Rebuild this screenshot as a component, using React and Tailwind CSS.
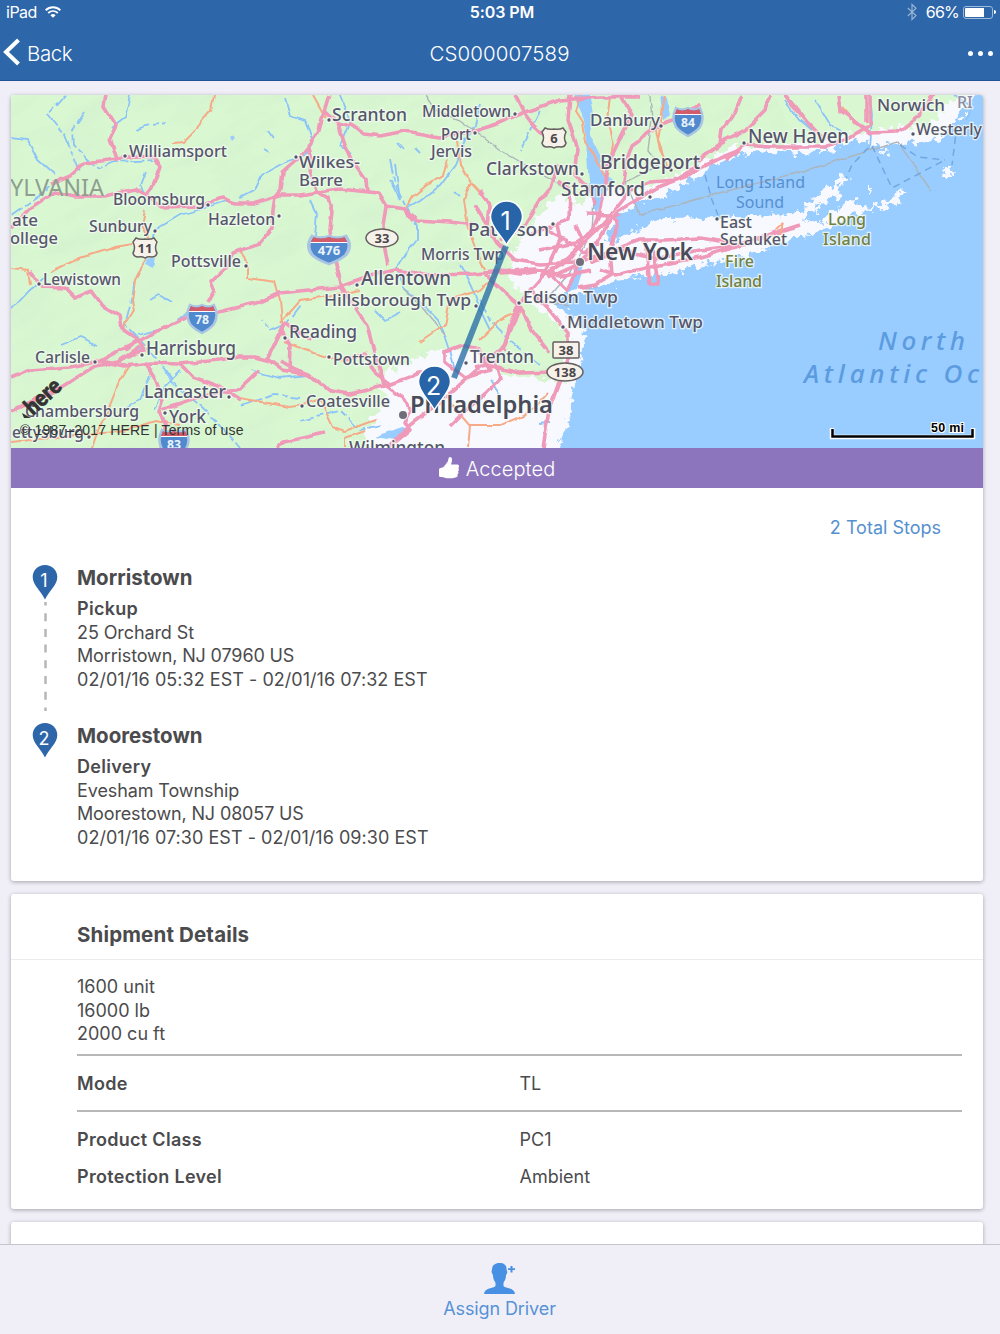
const stops = [
  {
    number: 1,
    city: "Morristown",
    type: "Pickup",
    address: "25 Orchard St",
    cityLine: "Morristown, NJ 07960 US",
    window: "02/01/16 05:32 EST - 02/01/16 07:32 EST",
  },
  {
    number: 2,
    city: "Moorestown",
    type: "Delivery",
    address: "Evesham Township",
    cityLine: "Moorestown, NJ 08057 US",
    window: "02/01/16 07:30 EST - 02/01/16 09:30 EST",
  },
];

const highways = [
  "M106 95L104 107L116 126L110 138L117 159",
  "M11 228L30 208L55 192L75 196L105 196L135 189L147 195L160 207L200 206L222 198L235 203L253 203L280 195L300 195L318 192L340 189L378 193L386 206L405 209L413 220",
  "M52 184L70 176L85 163L117 159L135 156L155 157L160 166L152 188L147 195",
  "M329 95L325 108L318 133L300 157L283 172L281 190L275 197L273 210L272 228L258 245L240 250L232 253L225 268L210 282L214 292L208 303",
  "M325 112L338 124L345 145L352 160L366 180L367 191",
  "M338 125L350 123L365 134L380 136L405 131L440 137L475 131L500 123L525 112L560 100L600 97L640 97",
  "M308 148L311 160L310 175L318 192L328 198L332 212L330 230L335 260L342 287",
  "M386 207L383 225L385 250L388 265",
  "M406 209L417 220L450 222L475 225",
  "M11 378L30 370L70 367L100 361L120 350L137 342L150 335L165 327L187 317L215 313L260 302L280 293L340 287L370 276L395 270L430 275L475 274L510 270",
  "M100 361L125 366L150 363L180 364L220 360L240 357L255 357L270 361L282 370L310 375L330 391L350 394L375 388L385 386L420 373L440 372",
  "M30 272L42 287L65 288L75 298L92 291L103 306L120 316L122 329L137 339L145 350",
  "M11 411L55 391L95 366L118 362L140 347",
  "M145 362L155 378L163 400L160 412L165 425L160 448",
  "M163 410L195 398L240 389L260 370",
  "M180 364L193 377L220 387L240 400",
  "M390 384L375 373L365 354L345 360",
  "M340 287L357 310L367 325L374 352L385 385L403 397L410 410L404 423L410 430L388 448",
  "M276 448L284 442L325 433",
  "M515 95L524 113L534 126L548 139",
  "M570 95L568 120L575 140L578 150L575 175L590 190L595 205",
  "M620 95L632 115L622 135L608 165L605 190L600 212L590 236",
  "M700 105L682 118L660 125L632 145L625 165L622 190",
  "M742 95L735 112L722 130L720 145L695 162",
  "M770 95L765 110L745 130L725 140L700 160",
  "M785 95L808 123L825 140",
  "M838 95L840 110L856 122L870 133L898 132L920 115L933 95",
  "M866 95L866 122",
  "M725 160L745 145L770 147L825 147L850 137L870 125L870 95",
  "M740 150L720 158L700 168L690 175L660 186L640 198L618 211L605 228L592 250L575 266L548 278",
  "M700 165L675 180L650 182L630 190L610 215L595 232L565 260L540 280L522 300L505 345L440 402L410 425L388 448",
  "M480 190L489 206L487 225L498 243L515 260L540 264L575 262",
  "M500 240L525 225L540 200L550 188L557 165",
  "M530 235L557 224L569 220L570 190L558 180",
  "M500 270L520 273L540 270L555 278L567 290L580 263L607 252L640 240L665 240L700 238L740 244L800 225",
  "M590 263L620 250L655 259L700 250L750 244",
  "M600 270L615 275L650 267L700 257L735 247L775 231",
  "M645 240L650 284L658 284L653 250",
  "M610 250L612 275L595 285L578 288",
  "M485 274L505 293L520 306L530 328L549 352",
  "M530 290L550 310L568 333L568 360L558 385L549 410L543 448",
  "M490 366L520 373L553 372",
  "M475 367L495 362L500 378L486 393L465 410L450 425",
  "M445 352L460 346L480 350L490 370L465 378L445 362L445 350",
  "M280 361L290 367L310 375",
  "M267 360L285 322L310 340",
  "M289 373L290 345L280 330L284 322",
  "M520 302L510 325L503 350",
  "M475 206L487 225",
];

const interchanges = [
  "M545 230L565 240L585 252L600 243",
  "M540 250L575 243L595 230L620 214",
  "M557 224L560 240L548 265L538 283",
  "M575 225L582 240L570 260L550 270",
  "M500 272L535 269L565 276L590 270",
  "M587 214L610 215L618 222L612 245",
  "M120 362L135 353L145 351L138 340L125 350",
];

const minorRoads = [
  "M214 95L211 110L201 121L195 132L184 143L172 144",
  "M50 272L80 258L115 247L145 242L147 258L135 280L132 300L134 310L122 330",
  "M145 210L142 225L150 240",
  "M238 250L247 260L247 278L275 282L280 300L282 322",
  "M313 95L326 118",
  "M457 140L460 165L471 183L463 200L467 225L476 250L485 270",
  "M448 160L443 175L427 185L412 197L406 208",
  "M471 183L485 198L491 212",
  "M580 95L575 112L582 123L585 142L595 155L605 178",
  "M610 97L607 120L613 145L608 175",
  "M655 125L660 150L672 172",
  "M665 95L658 140L665 160",
  "M130 365L118 385L108 410L98 430L92 448",
  "M11 268L28 270L30 285",
  "M240 398L290 407L303 405L320 399L333 427L345 431L375 420",
  "M11 442L50 438L85 434L120 432L155 421L180 425",
  "M284 342L328 358L350 360",
  "M420 342L445 325L450 300L480 290L500 270",
  "M440 390L470 425L500 425L530 412L548 392",
  "M470 425L468 448",
  "M480 340L500 320L520 311",
  "M365 431L345 438L345 448",
  "M842 108L856 124",
  "M280 322L300 300L322 297L360 290",
];

const rivers = [
  "M65 95L48 115L65 135L73 155L80 172",
  "M130 95L125 118L112 128",
  "M11 138L28 140L38 160L55 175",
  "M84 112L72 130L73 145L90 162L100 168L115 162L155 160",
  "M285 98L290 115L305 120L312 140L305 155L290 160L262 175L255 190L240 198",
  "M147 196L140 185L145 172",
  "M11 215L40 195L55 182",
  "M155 230L180 215L205 208L230 200",
  "M480 105L475 125L465 140L455 165L440 185L420 200L408 207L417 225L417 240L405 255L397 268L405 290L420 302L438 320L445 335L450 350L455 370",
  "M155 233L150 255L140 270L133 285L130 305L125 325L140 340L165 368L180 390L200 405L225 430L240 448",
  "M11 310L30 290L45 278",
  "M138 335L165 328L195 308",
  "M300 305L287 322L270 330L262 320",
  "M310 200L317 215L315 235L320 255",
  "M395 165L400 200L390 180",
  "M390 160L395 185L405 205",
  "M340 95L350 120L340 145L352 155",
  "M250 370L280 378L308 375",
  "M240 405L258 400L275 395L300 398",
  "M60 345L80 337L98 345M150 300L160 295L172 302",
  "M375 310L385 320L400 312",
  "M480 300L490 320L510 340L540 365",
  "M490 380L500 395M538 424L550 423",
  "M460 265L468 280L475 295L480 310L490 330",
  "M540 110L530 130L520 150M630 120L615 150",
  "M785 100L800 120L812 130M815 100L830 125L845 133",
  "M180 370L165 385L155 410M150 375L140 400L120 412",
  "M300 420L340 410L360 430L380 425",
  "M268 130L274 138M265 150L270 153M398 143L404 150M415 147L420 152M455 192L460 196",
  "M870 95L872 115L870 150M955 95L972 108L966 120",
  "M136 130L145 126L165 123",
];

const lakes = [
  "M573 95L589 95L594 118L590 135L600 155L602 170L612 180L603 200L596 215L590 195L588 170L586 140L582 115Z",
  "M660 95L667 98L670 115L663 120Z",
  "M148 260L155 258L153 268L146 265Z",
  "M137 346L143 348L141 354Z",
  "M375 437L402 427L412 430L396 440Z",
  "M575 265L584 265L577 290L568 292Z",
  "M230 137L233 135L235 138L232 141Z",
  "M162 365L170 375L176 388L170 382Z",
];

// [text, x, baseline, width, size]
const cityLabels = [
  ["Scranton", 332, 121, 75, 18],
  ["Middletown", 422, 117, 89, 17],
  ["Port", 441, 140, 30, 16],
  ["Jervis", 431, 157, 41, 16],
  ["Williamsport", 129, 157, 98, 17],
  ["Wilkes-", 299, 168, 61, 17],
  ["Barre", 299, 186, 44, 17],
  ["Clarkstown", 486, 175, 93, 18],
  ["Danbury", 590, 126, 70, 17],
  ["Bridgeport", 600, 169, 100, 19],
  ["Stamford", 561, 196, 84, 19],
  ["New Haven", 748, 143, 101, 19],
  ["Norwich", 877, 111, 68, 17],
  ["Westerly", 916, 135, 66, 17],
  ["Bloomsburg", 113, 205, 92, 17],
  ["Sunbury", 89, 232, 63, 17],
  ["Hazleton", 208, 225, 67, 17],
  ["ate", 12, 226, 26, 17],
  ["ollege", 10, 244, 48, 17],
  ["Pottsville", 171, 267, 70, 17],
  ["Lewistown", 43, 285, 78, 17],
  ["Paterson", 468, 236, 81, 18],
  ["Morris Twp", 421, 260, 83, 17],
  ["Allentown", 361, 285, 90, 19],
  ["Hillsborough Twp", 324, 306, 147, 17],
  ["Edison Twp", 523, 303, 95, 17],
  ["Middletown Twp", 567, 328, 136, 17],
  ["Harrisburg", 146, 355, 90, 19],
  ["Carlisle", 35, 363, 55, 17],
  ["Reading", 289, 338, 68, 18],
  ["Pottstown", 333, 365, 77, 17],
  ["Trenton", 470, 363, 64, 18],
  ["Coatesville", 306, 407, 84, 17],
  ["Lancaster", 144, 398, 82, 18],
  ["Chambersburg", 25, 417, 114, 17],
  ["York", 169, 423, 37, 18],
  ["ettysburg", 12, 438, 72, 17],
  ["East", 720, 228, 32, 16],
  ["Setauket", 720, 245, 67, 16],
  ["Wilmington", 349, 454, 96, 18],
];

const dots = [
  [329, 120], [515, 114], [475, 133], [125, 156], [296, 157], [582, 174], [661, 126],
  [671, 170], [650, 197], [744, 143], [913, 134], [208, 205], [155, 231], [279, 216],
  [246, 266], [39, 284], [553, 224], [357, 285], [476, 306], [519, 303], [563, 327],
  [142, 355], [95, 362], [285, 338], [329, 357], [466, 363], [302, 406], [229, 397],
  [165, 413], [89, 437], [717, 219],
];

function MapPin({ x, y, number }) {
  return (
    <g transform={`translate(${x} ${y})`}>
      <path
        d="M0 0C-5 -10 -16 -18 -16 -28C-16 -37 -9 -44 0 -44C9 -44 16 -37 16 -28C16 -18 5 -10 0 0Z"
        fill="#2865a8"
        stroke="#fff"
        strokeWidth="1.5"
      />
      <text y="-15" x="-1" textAnchor="middle" className="fill-white font-['Inter'] text-[25px]">
        {number}
      </text>
    </g>
  );
}

function InterstateShield({ x, y, label, wide }) {
  return (
    <g transform={`translate(${x} ${y}) scale(${wide ? 1.4 : 1} 1)`}>
      <path
        d="M-12 -13Q-6 -10 0 -13Q6 -10 12 -13Q17 -3 12 6Q8 11 0 15Q-8 11 -12 6Q-17 -3 -12 -13Z"
        fill="#5089cd"
        stroke="#a9c5e2"
        strokeWidth="2.5"
      />
      <path d="M-11 -12Q-6 -9 0 -12Q6 -9 11 -12L13 -7H-13Z" fill="#d45b6a" />
      <path d="M-13 -6.5H13" stroke="#fff" strokeWidth="1" />
      <text
        y="6"
        textAnchor="middle"
        textLength={wide ? 16 : 14}
        lengthAdjust="spacingAndGlyphs"
        className="fill-[#e9f3fc] font-['Noto_Sans'] text-[13px] font-bold"
      >
        {label}
      </text>
    </g>
  );
}

function RouteBadge({ x, y, width, label, shape }) {
  return (
    <g transform={`translate(${x} ${y})`} fill="#f6f2ea" stroke="#665f60" strokeWidth="1.5">
      {shape === "oval" && <ellipse rx={width / 2} ry="9" />}
      {shape === "rect" && <rect x={-width / 2} y="-8" width={width} height="16" rx="1" />}
      {shape === "us" && (
        <path d="M-9 -10Q-5 -8 0 -9Q5 -8 9 -10L12 -6Q9 0 12 5Q11 9 7 9Q3 8 0 10Q-3 8 -7 9Q-11 9 -12 5Q-9 0 -12 -6Z" />
      )}
      <text
        y="5"
        textAnchor="middle"
        stroke="none"
        className="fill-[#4c474c] font-['Noto_Sans'] text-[13px] font-bold"
      >
        {label}
      </text>
    </g>
  );
}

function RouteMap() {
  return (
    <svg viewBox="11 95 972 353" className="block h-[353px] w-full overflow-hidden">
      <defs>
        <filter id="coast" x="-5%" y="-5%" width="110%" height="110%">
          <feTurbulence type="fractalNoise" baseFrequency="0.14" numOctaves="3" seed="4" result="noise" />
          <feDisplacementMap
            in="SourceGraphic"
            in2="noise"
            scale="17"
            xChannelSelector="R"
            yChannelSelector="G"
            result="moved"
          />
          <feGaussianBlur in="moved" stdDeviation="0.4" />
        </filter>
        <filter id="wiggle" x="-5%" y="-5%" width="110%" height="110%">
          <feTurbulence type="fractalNoise" baseFrequency="0.07" numOctaves="2" seed="9" result="noise" />
          <feDisplacementMap
            in="SourceGraphic"
            in2="noise"
            scale="5"
            xChannelSelector="R"
            yChannelSelector="G"
            result="moved"
          />
          <feGaussianBlur in="moved" stdDeviation="0.6" />
        </filter>
        <filter id="relief" x="0" y="0" width="100%" height="100%">
          <feTurbulence type="fractalNoise" baseFrequency="0.015 0.045" numOctaves="4" seed="3" />
          <feColorMatrix values="0 0 0 0 0.5  0 0 0 0 0.68  0 0 0 0 0.5  0 1.8 0 0 -0.75" />
        </filter>
      </defs>

      <rect x="11" y="95" width="972" height="353" fill="#d9f8d2" />
      <g transform="rotate(-28 300 270)" opacity="0.2">
        <rect x="-100" y="-50" width="900" height="640" filter="url(#relief)" />
      </g>

      {/* Metro areas and coastline */}
      <g filter="url(#coast)">
        <path
          d="M545 205L562 195L580 205L600 185L640 190L700 165L735 145L770 146L830 140L870 130L930 125L950 100L1010 80V300L600 330L590 480H370L366 430L385 400L380 375L425 355L445 348L480 352L500 372L565 382L560 350L570 335L540 310L515 292L505 270L525 235Z"
          fill="#f7f9ff"
        />
        <path d="M440 268L503 273L530 303L553 332L556 362L535 371L505 362L470 347L440 346Z" fill="#d9f8d2" />
        <path
          d="M605 240L618 215L640 202L665 196L690 180L715 165L735 156L760 151L800 154L835 149L855 138L870 145L905 144L935 140L955 121L970 105L985 85H1020V480H556L560 445L570 415L575 385L582 350L586 330L578 320L555 305L545 302L565 295L588 292L610 283L640 274L690 262L740 252L780 243L812 229L830 226L790 215L720 217L665 218L635 232L615 245Z"
          fill="#99ccff"
        />
        <path
          d="M606 245L630 233L660 219L700 226L730 216L780 217L803 210L822 191L844 176L848 179L832 195L812 212L795 222L815 226L830 215L845 204L856 198L868 210L880 203L900 192L908 193L890 207L860 213L820 232L790 240L760 252L720 262L680 270L640 277L600 286L590 278Z"
          fill="#f7f9ff"
        />
        <path
          d="M943 170L952 168L953 176L945 176ZM866 188L874 188L870 193ZM880 151L890 149L885 154ZM832 188L842 194L836 199Z"
          fill="#f7f9ff"
        />
      </g>

      <g filter="url(#wiggle)">
        {lakes.map((d) => (
          <path key={d} d={d} fill="#99ccff" />
        ))}
        <g fill="none" stroke="#8cc3f8" strokeWidth="1.8">
          {rivers.map((d, i) => (
            <path key={d} d={d} strokeDasharray={i % 3 === 0 ? "14 3 6 3" : undefined} />
          ))}
        </g>
        <g fill="none" stroke="#abb5bb" strokeWidth="1.4">
          <path d="M425 95L435 110L460 120L500 150L545 176L570 190" />
          <path d="M650 95L652 120L648 150L660 165L625 182L640 215L720 193L800 172L898 142L932 192" />
          <path d="M594 200L592 230L580 255L568 275L545 302L568 306M405 290L420 305L445 335" />
        </g>
        <g fill="none" stroke="#f6aa88" strokeWidth="2">
          {minorRoads.map((d) => (
            <path key={d} d={d} />
          ))}
        </g>
        <g fill="none" stroke="#f09ab9" strokeWidth="3.6" strokeLinejoin="round">
          {highways.map((d) => (
            <path key={d} d={d} />
          ))}
          {interchanges.map((d) => (
            <path key={d} d={d} />
          ))}
        </g>
        <path d="M775 230L783 223L779 234" fill="none" stroke="#f6aa88" strokeWidth="2" />
      </g>

      {/* Ferry lines */}
      <g fill="none" stroke="#6ea6e0" strokeWidth="1.4" strokeDasharray="7 5">
        <path d="M872 146L892 188L945 160M900 145L918 157L945 160M957 125L952 165" />
        <path d="M868 148L852 165L846 178M705 175L712 200L718 215" />
      </g>

      <text
        x="10"
        y="196"
        textLength="94"
        lengthAdjust="spacingAndGlyphs"
        className="fill-[#8f9f90] font-['Noto_Sans'] text-[24px]"
      >
        YLVANIA
      </text>

      <g
        className="font-['Noto_Sans'] font-medium"
        fill="#56566b"
        stroke="#f5fbf5"
        strokeOpacity="0.8"
        strokeWidth="2.5"
        paintOrder="stroke"
      >
        {dots.map(([x, y]) => (
          <circle key={`${x}-${y}`} cx={x} cy={y} r="1.7" />
        ))}
        {cityLabels.map(([text, x, y, width, size]) => (
          <text key={text} x={x} y={y} textLength={width} lengthAdjust="spacingAndGlyphs" fontSize={size}>
            {text}
          </text>
        ))}
        <text x="957" y="108" fontSize="16" fill="#8c8ca3">RI</text>
        <circle cx="580" cy="262" r="4" fill="#706e7b" />
        <circle cx="403" cy="415" r="4" fill="#706e7b" />
        <g fontSize="24" fill="#4a4a5a" className="font-semibold">
          <text x="587" y="260" textLength="106" lengthAdjust="spacingAndGlyphs">New York</text>
          <text x="410" y="413" textLength="143" lengthAdjust="spacingAndGlyphs">Philadelphia</text>
        </g>
        <g fill="#718044" fontSize="16">
          <text x="828" y="225" textLength="38">Long</text>
          <text x="823" y="245" textLength="48">Island</text>
          <text x="725" y="267" textLength="29">Fire</text>
          <text x="716" y="287" textLength="46">Island</text>
        </g>
      </g>
      <g fill="#568fd0" className="font-['Noto_Sans']">
        <text x="716" y="188" textLength="89" fontSize="16">Long Island</text>
        <text x="736" y="208" textLength="48" fontSize="16">Sound</text>
        <g fontSize="26" fontStyle="italic" fill="#5b9be0" className="font-medium">
          <text x="878" y="350" textLength="87">North</text>
          <text x="804" y="383" textLength="175">Atlantic Oc</text>
        </g>
      </g>

      <InterstateShield x={688} y={121} label="84" />
      <InterstateShield x={329} y={249} label="476" wide />
      <InterstateShield x={202} y={318} label="78" />
      <InterstateShield x={174} y={443} label="83" />
      <RouteBadge x={554} y={138} width={24} label="6" shape="us" />
      <RouteBadge x={145} y={248} width={24} label="11" shape="us" />
      <RouteBadge x={382} y={238} width={32} label="33" shape="oval" />
      <RouteBadge x={565} y={372} width={36} label="138" shape="oval" />
      <RouteBadge x={566} y={350} width={26} label="38" shape="rect" />

      {/* Route */}
      <path d="M506 246L454 378" stroke="#2b6fa6" strokeOpacity="0.8" strokeWidth="6" />
      <MapPin x={506.5} y={245} number={1} />
      <MapPin x={434.5} y={410} number={2} />

      {/* Attribution and scale */}
      <g fill="#333">
        <path d="M22 413L24 418L31 418Z" />
        <text
          transform="translate(33 416) rotate(-43)"
          textLength="41"
          lengthAdjust="spacingAndGlyphs"
          stroke="#333"
          strokeWidth="0.8"
          className="font-['Lato'] text-[23px] font-black"
        >
          here
        </text>
        <text x="20" y="434.5" textLength="223.5" className="font-['Liberation_Sans'] text-[14px]">
          © 1987–2017 HERE | Terms of use
        </text>
      </g>
      <path d="M832 428V437H973V428" fill="none" stroke="#fff" strokeWidth="4.5" />
      <path d="M832.5 429V436.5H972.5V429" fill="none" stroke="#000" strokeWidth="2.5" />
      <text
        x="931"
        y="432"
        textLength="33"
        stroke="#fff"
        strokeWidth="2"
        paintOrder="stroke"
        className="font-['Liberation_Sans'] text-[12.5px] font-bold"
      >
        50 mi
      </text>
    </svg>
  );
}

function StopPin({ number }) {
  return (
    <svg viewBox="0 0 26 36" className="h-9 w-[26px] shrink-0">
      <path d="M13 35.5C9 27 .7 21 .7 13C.7 6 6 1 13 1C20 1 25.3 6 25.3 13C25.3 21 17 27 13 35.5Z" fill="#2d66a9" />
      <text x="12" y="23" textAnchor="middle" className="fill-white font-['Inter'] text-[18px]">
        {number}
      </text>
    </svg>
  );
}

function Header() {
  return (
    <header className="h-[81px] border-b border-[#1f5594] bg-[#2d66a9] text-white">
      <div className="grid h-[23px] grid-cols-3 items-center px-1.5 text-base">
        <div className="flex items-center gap-2">
          <span className="tracking-[-0.5px]">iPad</span>
          <svg viewBox="0 0 16 12" className="h-3 w-4" fill="none" stroke="currentColor" strokeWidth="1.9">
            <path d="M.7 4.2C4.8 .3 11.2 .3 15.3 4.2M3.2 7C6 4.5 10 4.5 12.8 7" />
            <path d="M5.4 9.2Q8 7 10.6 9.2L8 11.8Z" fill="currentColor" stroke="none" />
          </svg>
        </div>
        <span className="pl-1 text-center font-semibold tracking-[-0.1px]">5:03 PM</span>
        <div className="flex items-center justify-end">
          <svg
            viewBox="0 0 10 18"
            className="mr-[9px] h-[18px] w-[10px] opacity-50"
            fill="none"
            stroke="currentColor"
            strokeWidth="1.2"
          >
            <path d="M.8 5L9 12.5L5 16.5V1.5L9 5.3L.8 13" />
          </svg>
          <span className="mr-[4px] tracking-[-0.8px]">66%</span>
          <span className="flex h-[13px] w-[30px] rounded-[3px] border border-[#9dbbdd] p-px">
            <span className="w-[19px] rounded-l-[1px] bg-white" />
          </span>
          <span className="-mr-0.5 ml-px h-1 w-[2px] rounded-r bg-white" />
        </div>
      </div>
      <div className="grid h-[57px] grid-cols-3 items-center pt-[4px] text-[20.5px] font-light">
        <div className="flex items-center">
          <svg
            viewBox="0 0 18 28"
            className="-mt-1 ml-[3px] h-[28px] w-[18px]"
            fill="none"
            stroke="currentColor"
            strokeWidth="4"
          >
            <path d="M15.5 2L3 14L15.5 26" />
          </svg>
          <span className="ml-1.5 tracking-[-0.4px]">Back</span>
        </div>
        <h1 className="pr-px text-center tracking-[0.1px]">CS000007589</h1>
        <div className="mr-[7px] flex justify-end gap-[5px]">
          <span className="size-[5px] rounded-full bg-white" />
          <span className="size-[5px] rounded-full bg-white" />
          <span className="size-[5px] rounded-full bg-white" />
        </div>
      </div>
    </header>
  );
}

function DetailRow({ label, value }) {
  return (
    <div className="grid grid-cols-2 leading-6">
      <dt className="font-semibold tracking-[0.3px]">{label}</dt>
      <dd>{value}</dd>
    </div>
  );
}

export default function App() {
  return (
    <div className="flex h-[1334px] w-[1000px] flex-col overflow-hidden bg-[#f0eff8] font-['Inter',sans-serif] text-lg text-[#4b4b4d]">
      <Header />

      <main className="flex min-h-0 flex-1 flex-col gap-[13px] overflow-hidden pt-3.5 pr-[17px] pl-[11px]">
        <section className="h-[786px] shrink-0 overflow-hidden rounded-[3px] bg-white shadow-[0_1px_4px_rgba(0,0,0,0.32)]">
          <RouteMap />
          <div className="flex h-10 items-center justify-center gap-[7px] bg-[#8d75bd] text-xl text-white">
            <svg viewBox="0 0 20 22" className="h-[22px] w-5" fill="currentColor">
              <path d="M0 12.5Q0 11 1.5 11C4.5 11 6 8 8.5 5C9.5 3.5 9 0 11 0C13.5 0 13.5 3.5 12 7.5H18C20.5 7.5 20.5 10.5 19.3 11C20.3 12 20 13.8 19 14.2C19.8 15.3 19.5 16.8 18.5 17.3C19 19 18 20.3 16.5 20.5C12 21.8 8 21.5 5 20.5C3.5 20 2.5 20 1.5 20Q0 20 0 18.5Z" />
            </svg>
            <span className="pt-0.5 font-light tracking-[0.1px]">Accepted</span>
          </div>
          <p className="mt-[26px] mr-[42px] text-right leading-7 text-[#5590cf]">2 Total Stops</p>

          <div className="mt-[22px] pl-[21px]">
            {stops.map((stop, index) => (
              <div key={stop.number} className="flex h-[158px] gap-[19px]">
                <div className="flex flex-col items-center">
                  <StopPin number={stop.number} />
                  {index < stops.length - 1 && (
                    <svg viewBox="0 0 3 110" className="mt-0.5 h-[110px] w-[3px]">
                      <path
                        d="M1.5 0V109"
                        stroke="#b4b4b7"
                        strokeWidth="2.4"
                        strokeDasharray="8 7.7"
                        strokeDashoffset="4.5"
                      />
                    </svg>
                  )}
                </div>
                <div className="leading-[23.6px]">
                  <h2 className="text-[20.5px] leading-7 font-bold">{stop.city}</h2>
                  <p className="mt-[5px] font-semibold tracking-[0.3px]">{stop.type}</p>
                  <p className="tracking-[-0.1px]">{stop.address}</p>
                  <p className="tracking-[-0.14px]">{stop.cityLine}</p>
                  <p className="tracking-[0.04px]">{stop.window}</p>
                </div>
              </div>
            ))}
          </div>
        </section>

        <section className="h-[315px] shrink-0 rounded-[3px] bg-white shadow-[0_1px_4px_rgba(0,0,0,0.32)]">
          <h2 className="flex h-[66px] items-center border-b border-[#ececf0] pt-4 pl-[66px] text-[20.5px] font-bold tracking-[0.15px]">
            Shipment Details
          </h2>
          <div className="mr-[21px] ml-[66px]">
            <div className="border-b-2 border-[#b8b8bb] pt-[15px] pb-2 leading-[23.6px]">
              <p>1600 unit</p>
              <p>16000 lb</p>
              <p>2000 cu ft</p>
            </div>
            <dl>
              <div className="border-b-2 border-[#b8b8bb] pt-4 pb-3.5">
                <DetailRow label="Mode" value="TL" />
              </div>
              <div className="flex flex-col gap-[13px] pt-4">
                <DetailRow label="Product Class" value="PC1" />
                <DetailRow label="Protection Level" value="Ambient" />
              </div>
            </dl>
          </div>
        </section>

        <section className="h-20 shrink-0 rounded-[3px] bg-white shadow-[0_1px_4px_rgba(0,0,0,0.32)]" />
      </main>

      <footer className="flex h-[90px] shrink-0 flex-col items-center border-t border-[#c6c5cd] bg-[#f0eff8] pt-[18px] text-[#5792d5]">
        <svg viewBox="0 0 32 31" className="h-[31px] w-8" fill="#4790e3">
          <path d="M8 7C8 2 11 0 15.5 0C20 0 23 2 22.5 7C24 8 23 11 22 12C22 17 20 18 19.5 20V23C22 26 30 24 31 31H0C1 24 9 26 11.5 23V20C11 18 9 17 9 12C8 11 7 8 8 7Z" />
          <path d="M26.5 3H28.5V5.2H31V7H28.5V9.4H26.5V7H24V5.2H26.5Z" />
        </svg>
        <span className="mt-px mr-px leading-7 tracking-[-0.1px]">Assign Driver</span>
      </footer>
    </div>
  );
}
